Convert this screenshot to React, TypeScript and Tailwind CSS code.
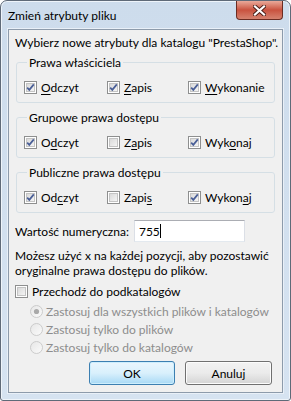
import React from 'react';

const font = { fontFamily: 'Lato, "Noto Sans", sans-serif' };

// accelerator letter underline
const Acc: React.FC<{ text: string; at: number }> = ({ text, at }) => (
    <span>
        {text.slice(0, at)}
        <span className="underline underline-offset-2">{text[at]}</span>
        {text.slice(at + 1)}
    </span>
);

const CheckBox: React.FC<{ checked?: boolean }> = ({ checked }) => (
    <svg width="13" height="13" viewBox="0 0 13 13" className="shrink-0">
        <defs>
            <linearGradient id="cbg" x1="0" y1="0" x2="1" y2="1">
                <stop offset="0" stopColor="#d8d8d8" />
                <stop offset="1" stopColor="#f6f6f6" />
            </linearGradient>
        </defs>
        <rect x="0.5" y="0.5" width="12" height="12" fill="#fff" stroke="#8e8f8f" />
        <rect x="2.5" y="2.5" width="8" height="8" fill="url(#cbg)" stroke="#c4c4c4" />
        {checked && (
            <path d="M3.2 6.6 L5.3 8.9 L9.8 3.4" fill="none" stroke="#4a5f97" strokeWidth="1.7" />
        )}
    </svg>
);

const Radio: React.FC<{ checked?: boolean }> = ({ checked }) => (
    <svg width="13" height="13" viewBox="0 0 13 13" className="shrink-0">
        <defs>
            <linearGradient id="rbg" x1="0" y1="0" x2="1" y2="1">
                <stop offset="0" stopColor="#e6e6e6" />
                <stop offset="1" stopColor="#fbfbfb" />
            </linearGradient>
        </defs>
        <circle cx="6.5" cy="6.5" r="6" fill="url(#rbg)" stroke="#cbcbcb" />
        {checked && <circle cx="6.5" cy="6.5" r="2.6" fill="#a9a9a9" />}
    </svg>
);

interface Item {
    label: string;
    at: number;
    checked: boolean;
}

const groups: { title: string; items: Item[] }[] = [
    {
        title: 'Prawa właściciela',
        items: [
            { label: 'Odczyt', at: 0, checked: true },
            { label: 'Zapis', at: 0, checked: true },
            { label: 'Wykonanie', at: 0, checked: true },
        ],
    },
    {
        title: 'Grupowe prawa dostępu',
        items: [
            { label: 'Odczyt', at: 1, checked: true },
            { label: 'Zapis', at: 1, checked: false },
            { label: 'Wykonaj', at: 3, checked: true },
        ],
    },
    {
        title: 'Publiczne prawa dostępu',
        items: [
            { label: 'Odczyt', at: 2, checked: true },
            { label: 'Zapis', at: 4, checked: false },
            { label: 'Wykonaj', at: 5, checked: true },
        ],
    },
];

const App: React.FC = () => {
    return (
        <div
            className="w-[291px] h-[401px] flex flex-col rounded-t-[7px] rounded-b-[3px] border border-[#5f6a78] bg-gradient-to-b from-[#cddcec] to-[#d6e3f1] shadow-[inset_0_0_0_1px_#eef4fa] text-[12px] leading-[15px] text-black overflow-hidden"
            style={font}
        >
            {/* Pasek tytułu */}
            <div className="h-[28px] flex items-start justify-between pl-[7px]">
                <span className="pt-[7px] text-[12px] leading-[15px]">Zmień atrybuty pliku</span>
                <div className="mr-[7px] w-[47px] h-[19px] rounded-b-[4px] border border-t-0 border-[#6b2c22] bg-gradient-to-b from-[#e9a99a] via-[#c9523f] to-[#d5826f] flex items-center justify-center">
                    <svg width="13" height="11" viewBox="0 0 13 11">
                        <path d="M2 1.5 L11 9.5 M11 1.5 L2 9.5" stroke="#4a1f18" strokeWidth="4" strokeLinecap="square" />
                        <path d="M2 1.5 L11 9.5 M11 1.5 L2 9.5" stroke="#fff" strokeWidth="2.2" strokeLinecap="square" />
                    </svg>
                </div>
            </div>

            {/* Obszar klienta */}
            <div className="mx-[7px] mb-[7px] flex-1 border border-[#8d9bab] shadow-[0_0_0_1px_#e9f0f8] bg-[#f0f0f0] px-[6px] pt-[5px] flex flex-col">
                <p className="whitespace-nowrap">Wybierz nowe atrybuty dla katalogu "PrestaShop".</p>

                <div className="mt-[5px] flex flex-col gap-[7px]">
                    {groups.map((g) => (
                        <fieldset
                            key={g.title}
                            className="border border-[#d5dfe5] rounded-[3px] mx-[1px] px-[7px] pt-[10px] pb-[7px]"
                        >
                            <legend className="px-[2px] ml-[3px]">{g.title}</legend>
                            <div className="grid grid-cols-[83px_81px_1fr]">
                                {g.items.map((it) => (
                                    <label key={it.label} className="flex items-center gap-[4px]">
                                        <CheckBox checked={it.checked} />
                                        <Acc text={it.label} at={it.at} />
                                    </label>
                                ))}
                            </div>
                        </fieldset>
                    ))}
                </div>

                <div className="mt-[7px] flex items-center gap-[5px]">
                    <span className="whitespace-nowrap">Wartość numeryczna:</span>
                    <div className="w-[111px] h-[22px] bg-white border border-[#abadb3] border-b-[#e3e9ef] border-x-[#dbdfe6] flex items-center pl-[4px]">
                        <span>755</span>
                        <span className="w-px h-[14px] bg-black" />
                    </div>
                </div>

                <p className="mt-[6px]">
                    Możesz użyć x na każdej pozycji, aby pozostawić oryginalne prawa dostępu do plików.
                </p>

                <label className="mt-[6px] flex items-center gap-[4px]">
                    <CheckBox />
                    <span>Przechodź do podkatalogów</span>
                </label>

                <div className="mt-[5px] pl-[15px] flex flex-col gap-[3px] text-[#8d8d8d]">
                    <div className="flex items-center gap-[3px]">
                        <Radio checked />
                        <span>Zastosuj dla wszystkich plików i katalogów</span>
                    </div>
                    <div className="flex items-center gap-[3px]">
                        <Radio />
                        <span>Zastosuj tylko do plików</span>
                    </div>
                    <div className="flex items-center gap-[3px]">
                        <Radio />
                        <span>Zastosuj tylko do katalogów</span>
                    </div>
                </div>

                <div className="mt-[6px] flex justify-end gap-[10px] pr-[4px]">
                    <button className="w-[86px] h-[24px] rounded-[3px] border border-[#3c7fb1] bg-gradient-to-b from-[#eaf6fd] via-[#d9f0fc] to-[#a7d9f5] shadow-[inset_0_0_0_1px_#cdeefd]">
                        OK
                    </button>
                    <button className="w-[87px] h-[24px] rounded-[3px] border border-[#707070] bg-gradient-to-b from-[#f2f2f2] via-[#ebebeb] to-[#d4d4d4] shadow-[inset_0_0_0_1px_#fcfcfc]">
                        Anuluj
                    </button>
                </div>
            </div>
        </div>
    );
};

export default App;
